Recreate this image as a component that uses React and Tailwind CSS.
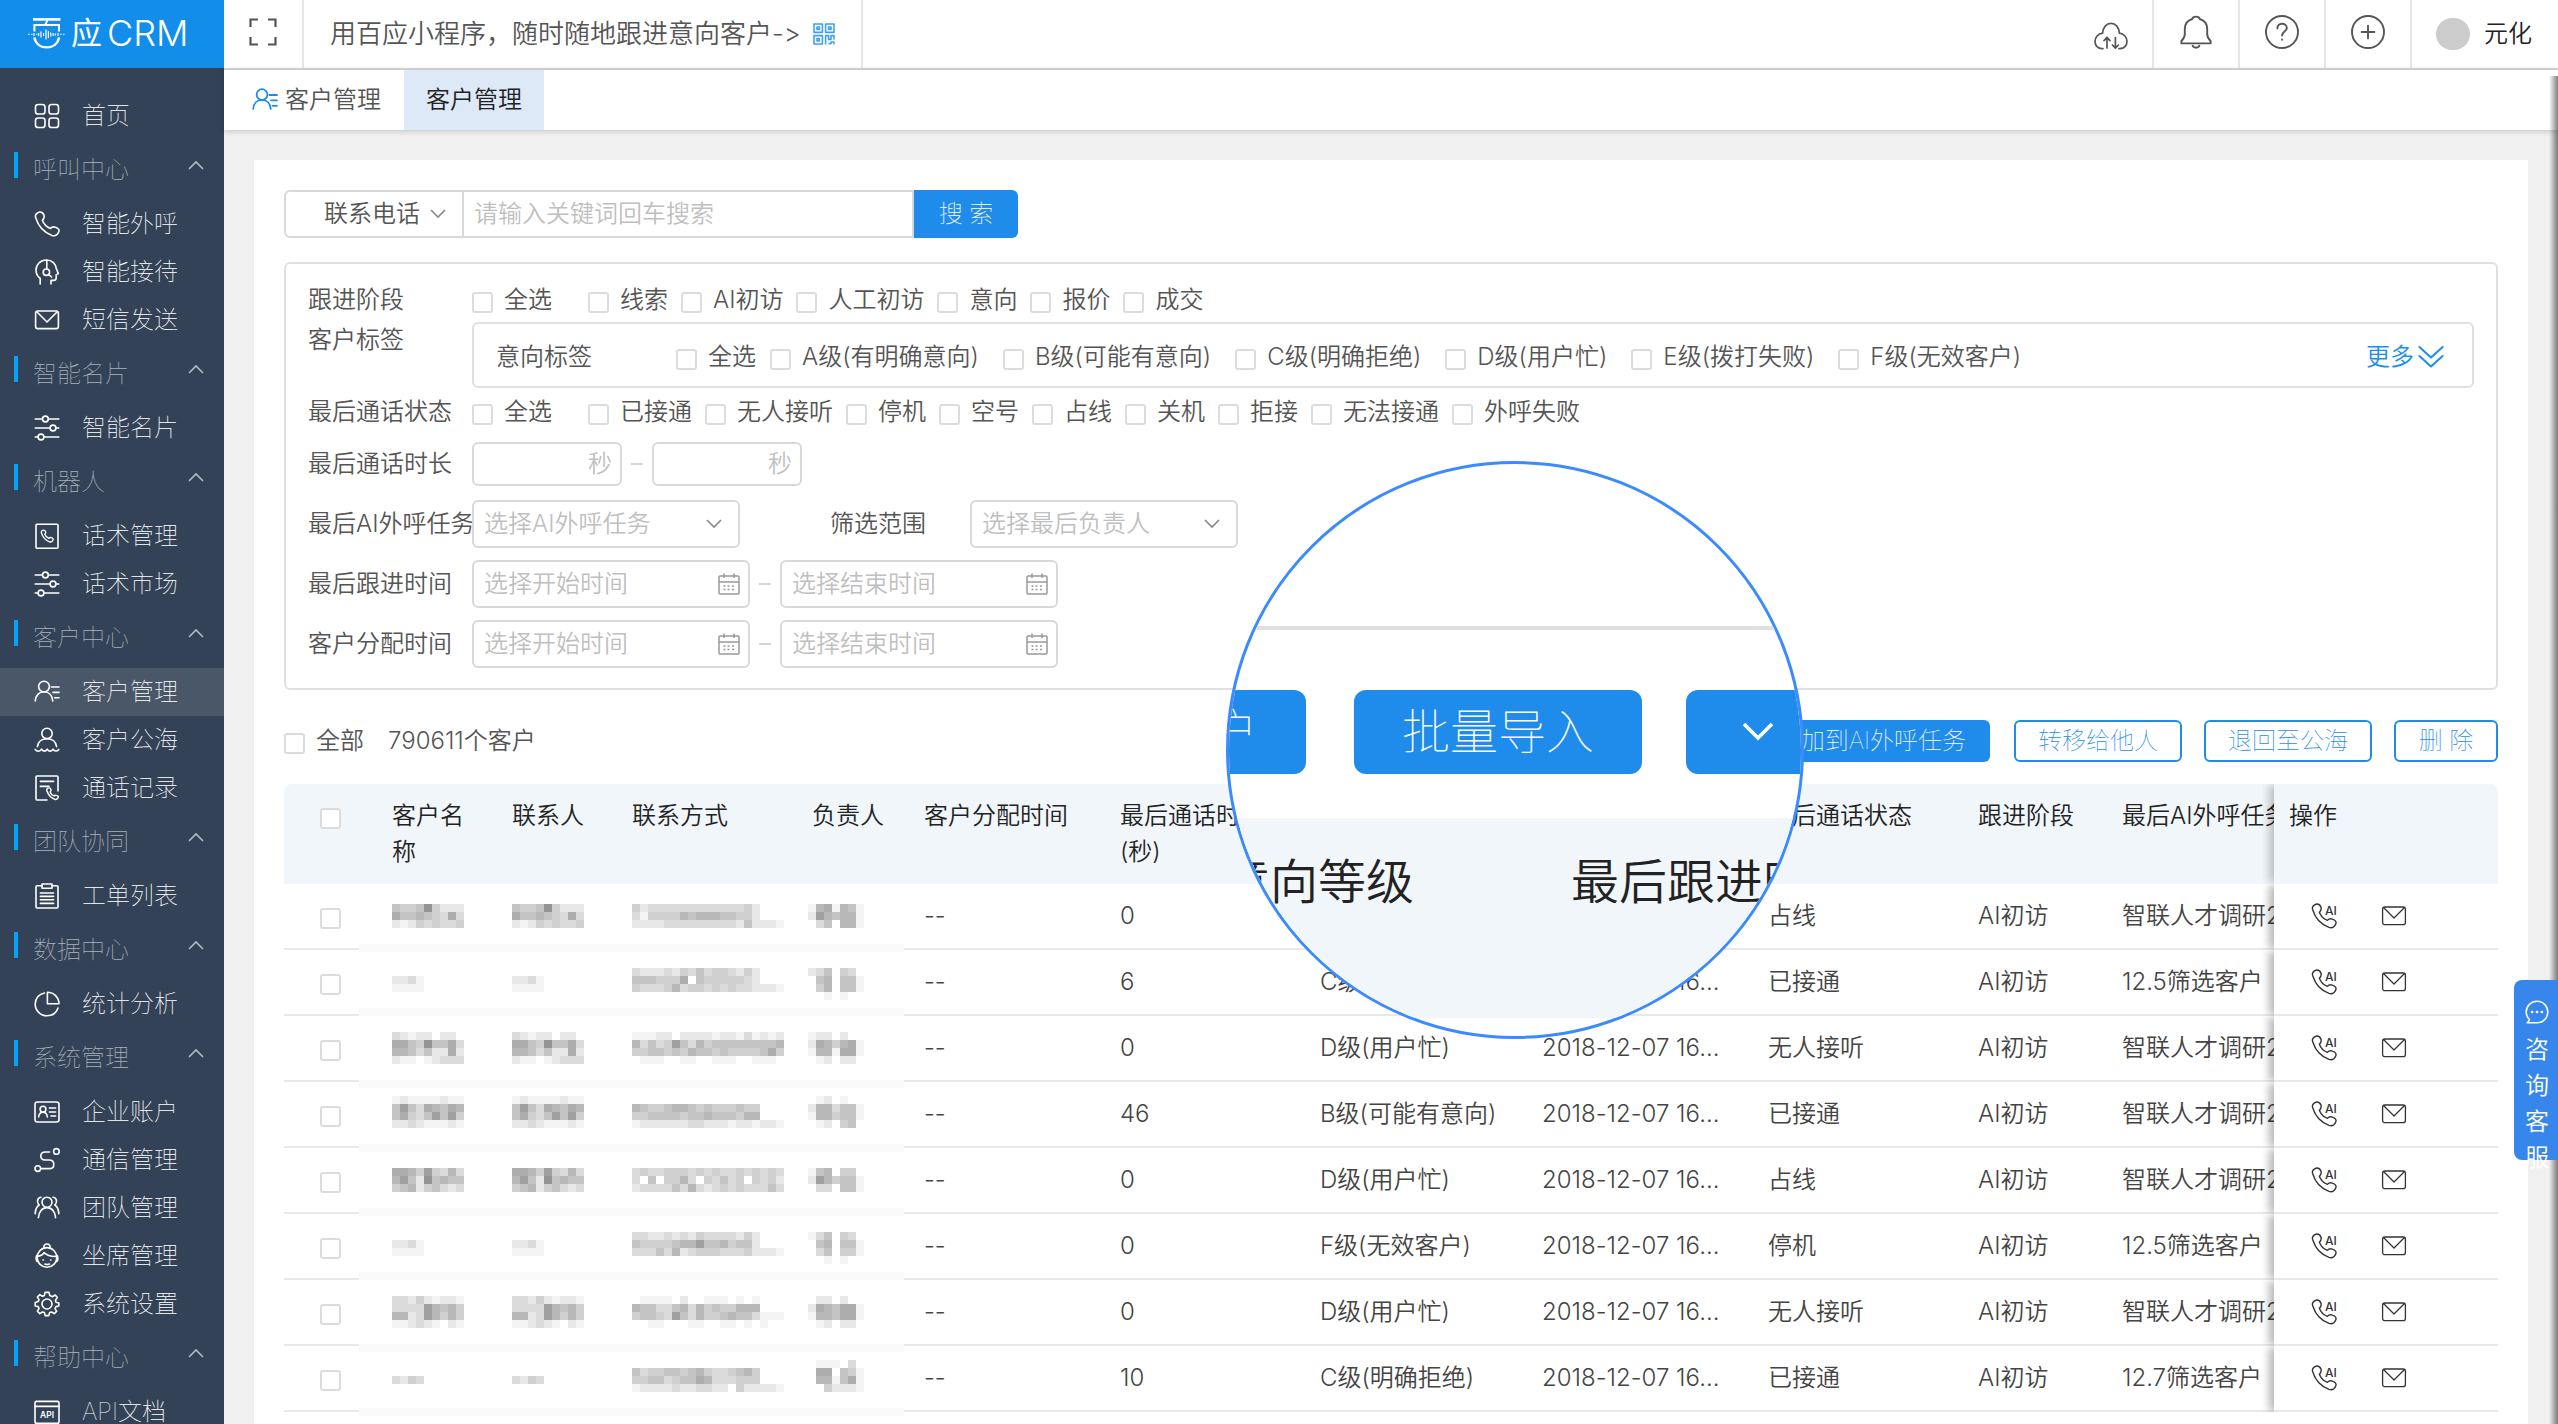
import React from 'react';

/* ---------- icons ---------- */

function Svg({ children, className = 'size-[26px]', sw = 1.6, box = '0 0 26 26' }) {
  return (
    <svg
      viewBox={box}
      className={'shrink-0 ' + className}
      fill="none"
      stroke="currentColor"
      strokeWidth={sw}
      strokeLinecap="round"
      strokeLinejoin="round"
      aria-hidden="true"
    >
      {children}
    </svg>
  );
}

const HANDSET =
  'M1.8 7 C0.6 4.4 2.4 1.6 5.6 1 C7.8 0.8 9.2 2 10 4.2 C10.8 6.6 9.8 7.8 8.4 9.2 C9.6 12.6 13 16 16.4 17.4 C17.8 15.8 19.4 15.4 21.4 16.2 C24.4 17.2 25.6 18.8 24.8 20.8 C23.6 23.8 21 25.4 18 24.4 C10.4 21.6 4.4 15.4 1.8 7 Z';

const ICONS = {
  home: (
    <>
      <rect x="1.5" y="1.5" width="9.5" height="9.5" rx="2.6" />
      <rect x="15" y="1.5" width="9.5" height="9.5" rx="2.6" />
      <rect x="1.5" y="15" width="9.5" height="9.5" rx="2.6" />
      <rect x="15" y="15" width="9.5" height="9.5" rx="2.6" />
    </>
  ),
  phone: <path d={HANDSET} />,
  head: (
    <>
      <path d="M6.2 25 V19.4 C3.6 17.6 2 14.4 2 11 C2 5.6 6.4 1 12.4 1 C18.4 1 21.8 5 22.2 9.4 L24.4 14.6 L22.2 15.8 V18.8 C22.2 20.6 21.4 21.4 19.8 21.4 H17 V25" />
      <path d="M12.8 1.2 V9.8" />
      <circle cx="12.4" cy="13.2" r="3.2" />
      <path d="M14.8 15.6 L17.6 18" />
    </>
  ),
  mail: (
    <>
      <rect x="1.6" y="4" width="22.8" height="17.6" rx="2.2" />
      <path d="M3 5 L13 15 L23 5" />
    </>
  ),
  sliders: (
    <>
      <path d="M1.2 4 H8.4 M14.4 4 H24.8 M1.2 13 H16 M22 13 H24.8 M1.2 22 H4 M10 22 H24.8" />
      <circle cx="11.4" cy="4" r="2.9" />
      <circle cx="19" cy="13" r="2.9" />
      <circle cx="7" cy="22" r="2.9" />
    </>
  ),
  book: (
    <>
      <rect x="2" y="1.2" width="22" height="24" rx="1" />
      <g transform="translate(6.6 6.6) scale(0.5)" strokeWidth="2.8">
        <path d={HANDSET} />
      </g>
    </>
  ),
  customer: (
    <>
      <circle cx="10" cy="7.6" r="5.4" />
      <path d="M1.2 22 C1.6 16.6 5 12.8 10 12.8 C15 12.8 18.2 16.6 18.8 22" />
      <path d="M17.4 8 H25 M19 13.4 H25 M20.6 18.8 H25" />
    </>
  ),
  sea: (
    <>
      <circle cx="13" cy="6.4" r="5.2" />
      <path d="M3.4 19.6 C4 15 7.6 11.8 13 11.8 C18.4 11.8 22 15 22.6 19.6" />
      <path d="M1.2 22.4 C3 24.8 6 24.8 7.6 22.2 C9.4 24.8 12 24.8 13.2 22.2 C15 24.8 17.6 24.8 19 22.2 C20.4 24.6 23 24.6 24.8 22.4" />
    </>
  ),
  record: (
    <>
      <path d="M13 25 H3 C2.4 25 2 24.6 2 24 V2 C2 1.4 2.4 1 3 1 H23 C23.6 1 24 1.4 24 2 V16" />
      <path d="M6.4 6.4 H19.6 M6.4 11.4 H15" />
      <g transform="translate(12 12.4) scale(0.49)" strokeWidth="3">
        <path d={HANDSET} />
      </g>
    </>
  ),
  clipboard: (
    <>
      <path d="M8 2.8 H3 C2.4 2.8 2 3.2 2 3.8 V24 C2 24.6 2.4 25 3 25 H23 C23.6 25 24 24.6 24 24 V3.8 C24 3.2 23.6 2.8 23 2.8 H18" />
      <rect x="8" y="1" width="10" height="4.2" />
      <path d="M6.4 10 H19.6 M6.4 13.4 H19.6 M6.4 16.8 H19.6 M6.4 20.4 H19.6" />
    </>
  ),
  pie: (
    <>
      <path d="M10.4 2 C5 3 1.2 7.6 1.2 13 C1.2 19.6 6.4 24.8 13 24.8 C18.2 24.8 22.4 21.6 24 17" />
      <path d="M13.4 1.2 V12.8 H25 C25 6.4 19.8 1.2 13.4 1.2 Z" />
    </>
  ),
  idcard: (
    <>
      <rect x="1" y="3" width="24" height="20" rx="2.4" />
      <circle cx="9" cy="10.2" r="2.9" />
      <path d="M4.6 18 C5 15 6.6 13.2 9 13.2 C11.4 13.2 13 15 13.4 18" />
      <path d="M15.4 9 H21.6 M15.4 13 H21.6 M17 17 H21.6" />
    </>
  ),
  route: (
    <>
      <circle cx="3.8" cy="21.6" r="2.8" />
      <circle cx="22.4" cy="4.4" r="2.8" />
      <path d="M15.6 5 H11.4 C8.6 5 6.8 6.8 6.8 9 C6.8 11.2 8.4 13 11 13 H15 C18 13 19.8 15 19.8 17.4 C19.8 19.8 18 21.6 15.4 21.6 H6.8" />
    </>
  ),
  team: (
    <>
      <circle cx="13" cy="7.2" r="5" />
      <path d="M4.4 22.6 C4.8 17 8 12.6 13 12.6 C18 12.6 21.2 17 21.6 22.6" />
      <path d="M7 2.2 C4.6 2.4 3.2 4.6 3.6 7 C3.8 8.4 4.4 9.4 5.2 10 C3 11.4 1.4 14.6 1.2 18.8" />
      <path d="M19 2.2 C21.4 2.4 22.8 4.6 22.4 7 C22.2 8.4 21.6 9.4 20.8 10 C23 11.4 24.6 14.6 24.8 18.8" />
    </>
  ),
  agent: (
    <>
      <circle cx="13" cy="14.4" r="9.8" />
      <path d="M9.8 4.8 C9.8 2.4 11 1 13 1 C15 1 16.2 2.4 16.2 4.8" />
      <path d="M3.4 12 C1.6 12.8 1.6 18 3.8 18.4 M22.6 12 C24.4 12.8 24.4 18 22.2 18.4" />
      <path d="M3.8 13.4 C7 12.8 9 11.6 10 9.6 C13 12.4 18 13.6 22.2 13.4" />
      <path d="M9 17 H9.4 M16.6 17 H17 M11 21 C12.4 21.6 14 21.6 15.4 21" />
    </>
  ),
  gear: (
    <>
      <circle cx="13" cy="13" r="5" />
      <path d="M11 1.4 H15 L15.8 4.6 L18.4 5.7 L21.2 4 L23.4 6.6 L21.4 9.2 L22 11.2 L24.8 12 V15 L22 15.6 L21 17.6 L22.6 20.4 L20.2 22.6 L17.6 21 L15.6 21.6 L14.8 24.6 H11.2 L10.4 21.6 L8.4 21 L5.8 22.6 L3.4 20.2 L5 17.6 L4.2 15.6 L1.2 15 V11.4 L4.2 10.6 L5 8.6 L3.4 6 L5.8 3.6 L8.4 5.2 L10.4 4.4 Z" />
    </>
  ),
  api: (
    <>
      <rect x="1" y="2.4" width="24" height="22" rx="1.6" />
      <path d="M1 7.4 H25" />
      <text x="13" y="19" textAnchor="middle" fontSize="8.5" fontWeight="600" fill="currentColor" stroke="none">
        API
      </text>
    </>
  ),
};

function Chevron({ up = false, className = 'h-[10px] w-4', sw = 1.6 }) {
  return (
    <svg viewBox="0 0 16 10" className={'shrink-0 ' + className} fill="none" stroke="currentColor" strokeWidth={sw} aria-hidden="true">
      <path d={up ? 'M1 9 L8 2 L15 9' : 'M1 1 L8 8 L15 1'} />
    </svg>
  );
}

function Calendar() {
  return (
    <svg viewBox="0 0 22 22" className="size-[22px] shrink-0 text-[#999]" fill="none" stroke="currentColor" strokeWidth="1.5" aria-hidden="true">
      <rect x="1" y="3" width="20" height="18" rx="1" />
      <path d="M1 9 H21 M6 0.5 V5 M16 0.5 V5" />
      <path d="M9.5 13 H11.5 M14 13 H16 M5.5 16.5 H7.5 M9.5 16.5 H11.5 M14 16.5 H16 M5.5 13 H7.5" />
    </svg>
  );
}

function CallAi() {
  return (
    <svg viewBox="0 0 28 26" className="h-[26px] w-7" fill="none" stroke="currentColor" strokeWidth="1.4" strokeLinejoin="round" aria-hidden="true">
      <path d={HANDSET} />
      <text x="14" y="12" fontSize="12" fontWeight="500" fill="currentColor" stroke="none">
        AI
      </text>
    </svg>
  );
}

/* ---------- sidebar ---------- */

const MENU = [
  { items: [['home', '首页']] },
  { title: '呼叫中心', items: [['phone', '智能外呼'], ['head', '智能接待'], ['mail', '短信发送']] },
  { title: '智能名片', items: [['sliders', '智能名片']] },
  { title: '机器人', items: [['book', '话术管理'], ['sliders', '话术市场']] },
  { title: '客户中心', items: [['customer', '客户管理', true], ['sea', '客户公海'], ['record', '通话记录']] },
  { title: '团队协同', items: [['clipboard', '工单列表']] },
  { title: '数据中心', items: [['pie', '统计分析']] },
  {
    title: '系统管理',
    items: [['idcard', '企业账户'], ['route', '通信管理'], ['team', '团队管理'], ['agent', '坐席管理'], ['gear', '系统设置']],
  },
  { title: '帮助中心', items: [['api', 'API文档']] },
];

function Logo() {
  return (
    <div className="flex h-[68px] shrink-0 items-center bg-[#128eea] pb-[2px] pl-7 text-white">
      <svg viewBox="0 0 38 34" className="h-[34px] w-[38px] shrink-0" fill="none" stroke="currentColor" strokeWidth="2" aria-hidden="true">
        <path d="M5 3.4 H32.4" strokeWidth="2.6" />
        <path d="M19.4 4 L17.4 9" />
        <path d="M6.4 15.4 V9 H31 V15.4" />
        <path d="M6.4 21.4 C7.4 27.8 12.4 31.4 18.7 31.4 C25 31.4 30 27.8 31 21.4" strokeWidth="2.4" />
        <path
          d="M0.2 18.4 H1.4 M3.2 18.4 H4.4 M6 17 V20 M8.2 18.4 H9.2 M10.6 17 V20 M13 15.6 V21.4 M15.6 17 V20 M18 13.4 V23.4 M20.4 15 V22 M22.8 16.4 V20.6 M25.2 17 V20 M27.4 17.4 V19.4 M30 17 V20 M32.4 18.4 H33.6 M35.2 18.4 H36.4"
          strokeWidth="1.2"
        />
      </svg>
      <span className="ml-[5px] text-[31px] leading-9 font-normal">应</span>
      <span className="ml-[5px] text-4xl leading-9 font-light">CRM</span>
    </div>
  );
}

function Sidebar() {
  return (
    <aside className="flex w-56 shrink-0 flex-col overflow-hidden bg-[#334257]">
      <Logo />
      <nav className="pt-6 font-thin text-white">
        {MENU.map((group, i) => (
          <section key={i}>
            {group.title && (
              <button type="button" className="flex h-[60px] w-full items-start pt-3 pr-5 pl-[14px] text-[#a9b1bb]">
                <span className="h-[26px] w-1 bg-[#00a5fb]" />
                <span className="ml-[15px] leading-9">{group.title}</span>
                <span className="mt-2 ml-auto text-[#b4bbc4]">
                  <Chevron up />
                </span>
              </button>
            )}
            <ul>
              {group.items.map(([icon, label, active]) => (
                <li key={label}>
                  <a href="#" className={'flex h-12 items-center gap-[22px] pl-[34px] ' + (active ? 'bg-[#4a5768]' : '')}>
                    <Svg>{ICONS[icon]}</Svg>
                    <span>{label}</span>
                  </a>
                </li>
              ))}
            </ul>
          </section>
        ))}
      </nav>
    </aside>
  );
}

/* ---------- header ---------- */

function TopBar() {
  const cell = 'flex h-full w-[86px] shrink-0 items-center justify-center border-l-2 border-[#e6e6e6] pb-1';
  return (
    <header className="flex h-[70px] shrink-0 items-center border-b-2 border-[#d8d8d8] bg-white text-[#555]">
      <button type="button" aria-label="全屏" className="flex h-full w-20 shrink-0 items-center justify-center border-r-2 border-[#e6e6e6] pb-1">
        <Svg sw={2.2} box="0 0 28 28" className="size-7">
          <path d="M1.5 9 V1.5 H9 M19 1.5 H26.5 V9 M26.5 19 V26.5 H19 M9 26.5 H1.5 V19" strokeLinecap="butt" strokeLinejoin="miter" />
        </Svg>
      </button>
      <p className="flex h-full items-center border-r-2 border-[#e6e6e6] pr-[26px] pl-[26px] text-[26px] whitespace-nowrap">
        用百应小程序，随时随地跟进意向客户-&gt;
        <Svg box="0 0 22 22" className="ml-3 size-[22px] text-[#3fa0ee]" sw={1.6}>
          <path d="M1 1 H9.4 V9.4 H1 Z M12.6 1 H21 V9.4 H12.6 Z M1 12.6 H9.4 V21 H1 Z M4 4 H6.4 V6.4 H4 Z M15.6 4 H18 V6.4 H15.6 Z M4 15.6 H6.4 V18 H4 Z" />
          <path d="M12.6 21 V12.6 H15.6 V16.4 H18 V12.6 H21 V16 M16 20.8 H18 V19 H21 V21" />
        </Svg>
      </p>
      <div className="ml-auto flex h-full items-center">
        <button type="button" aria-label="云同步" className="flex h-full w-[82px] items-center justify-center pt-1">
          <Svg box="0 0 34 28" className="h-7 w-[34px]" sw={1.7}>
            <path d="M9 26.6 H8 C4 26.6 1 23.8 1 19.6 C1 15.6 4 11.6 8.6 11.2 C9 5.4 12.4 1.4 17 1.4 C21.6 1.4 25 5.4 25.4 11.2 C30 11.6 33 15.6 33 19.6 C33 23.8 30 26.6 26 26.6 H25" />
            <path d="M13 26 V15.6 M10 18.6 L13 15.4 L16 18.6 M21.4 15.6 V26 M18.4 23 L21.4 26.2 L24.4 23" />
          </Svg>
        </button>
        <button type="button" aria-label="通知" className={cell}>
          <Svg box="0 0 34 34" className="size-[34px]" sw={1.9}>
            <path d="M2.4 28.4 H31.6 V26 C29.4 24 28.2 22 28.2 19 V14 C28.2 9 25.2 5.4 20.8 4 C20 0.8 14 0.8 13.2 4 C8.8 5.4 5.8 9 5.8 14 V19 C5.8 22 4.6 24 2.4 26 Z" />
            <path d="M13.6 30.6 C14.4 33.4 19.6 33.4 20.4 30.6" />
          </Svg>
        </button>
        <button type="button" aria-label="帮助" className={cell}>
          <Svg box="0 0 34 34" className="size-[34px]" sw={1.9}>
            <circle cx="17" cy="17" r="16" />
            <path d="M12.4 13.4 C12.4 10.6 14.4 8.8 17 8.8 C19.8 8.8 21.8 10.6 21.8 13 C21.8 16.6 17 16.6 17 20.6 M17 24.4 V24.8" />
          </Svg>
        </button>
        <button type="button" aria-label="新建" className={cell}>
          <Svg box="0 0 34 34" className="size-[34px]" sw={1.9}>
            <circle cx="17" cy="17" r="16" />
            <path d="M10.6 17 H23.4 M17 10.6 V23.4" />
          </Svg>
        </button>
        <button type="button" className="flex h-full items-center gap-[14px] border-l-2 border-[#e6e6e6] pr-[26px] pl-6 text-[#222]">
          <span className="h-8 w-[34px] rounded-full bg-[#ccc]" />
          元化
        </button>
      </div>
    </header>
  );
}

function TabBar() {
  return (
    <nav className="relative z-10 flex h-[60px] shrink-0 items-stretch bg-white shadow-[0_1px_6px_rgba(0,0,0,0.2)]">
      <a href="#" className="flex w-[180px] items-center gap-[7px] pl-7 text-[#555]">
        <Svg className="size-[26px] text-[#1f8ceb]" sw={1.8}>{ICONS.customer}</Svg>
        客户管理
      </a>
      <a href="#" className="flex w-[140px] items-center justify-center bg-[#dde9f7] text-[#222]">
        客户管理
      </a>
    </nav>
  );
}

/* ---------- filters ---------- */

function Check({ label, ariaLabel }) {
  return (
    <label className="flex shrink-0 items-center gap-3">
      <input
        type="checkbox"
        aria-label={ariaLabel}
        className="mt-1 size-[21px] shrink-0 appearance-none rounded-[3px] border-2 border-[#dcdcdc] bg-white checked:bg-[#1f8ceb]"
      />
      {label && <span className="-ml-px">{label}</span>}
    </label>
  );
}

function Row({ label, className, children }) {
  return (
    <div className={'flex items-center ' + className}>
      <span className="w-[164px] shrink-0 whitespace-nowrap">{label}</span>
      {children}
    </div>
  );
}

function SelectBox({ text, id }) {
  return (
    <span className="relative flex h-12 w-[268px] items-center">
      <select id={id} aria-label={text} className="h-full w-full appearance-none rounded-md border-2 border-[#d9d9d9] bg-transparent pl-[10px] text-[#bfbfbf]">
        <option>{text}</option>
      </select>
      <Chevron className="pointer-events-none absolute right-[18px] h-[10px] w-4 text-[#888]" />
    </span>
  );
}

function DateBox({ text }) {
  return (
    <span className="flex h-12 w-[278px] items-center rounded-md border-2 border-[#d9d9d9] pr-2 pl-[10px]">
      <input type="text" placeholder={text} aria-label={text} className="min-w-0 flex-1 outline-none placeholder:text-[#bfbfbf]" />
      <Calendar />
    </span>
  );
}

function SecondsBox({ name }) {
  return (
    <label className="flex h-11 w-[150px] items-center rounded-md border-2 border-[#d9d9d9] pr-2 pl-2 text-[#bfbfbf]">
      <input type="text" aria-label={name} className="min-w-0 flex-1 outline-none" />
      秒
    </label>
  );
}

const Dash = () => <span className="mx-[9px] h-[2px] w-3 bg-[#d5d5d5]" />;

function DateRange() {
  return (
    <>
      <DateBox text="选择开始时间" />
      <Dash />
      <DateBox text="选择结束时间" />
    </>
  );
}

function Filters() {
  return (
    <section className="mt-6 rounded-md border-2 border-[#e0e0e0] px-[22px] pt-[18px] pb-5 text-[#555]">
      <Row label="跟进阶段" className="h-9">
        <Check label="全选" />
        <div className="ml-9 flex gap-[13px]">
          {['线索', 'AI初访', '人工初访', '意向', '报价', '成交'].map((t) => (
            <Check key={t} label={t} />
          ))}
        </div>
      </Row>
      <div className="mt-1 flex">
        <span className="h-9 w-[164px] shrink-0 leading-9">客户标签</span>
        <div className="flex h-[66px] flex-1 items-center rounded-md border-2 border-[#e0e0e0] pt-1 pr-7 pl-[22px]">
          <span className="w-[180px] shrink-0">意向标签</span>
          <Check label="全选" />
          <div className="ml-[14px] flex gap-6">
            {['A级(有明确意向)', 'B级(可能有意向)', 'C级(明确拒绝)', 'D级(用户忙)', 'E级(拨打失败)', 'F级(无效客户)'].map((t) => (
              <Check key={t} label={t} />
            ))}
          </div>
          <button type="button" className="ml-auto flex items-center gap-1 text-[#1890f0]">
            更多
            <Svg box="0 0 26 24" className="h-6 w-[26px]" sw={2}>
              <path d="M1.4 2 L13 12.6 L24.6 2 M1.4 11 L13 21.6 L24.6 11" />
            </Svg>
          </button>
        </div>
      </div>
      <Row label="最后通话状态" className="mt-[6px] h-9">
        <Check label="全选" />
        <div className="ml-9 flex gap-[13px]">
          {['已接通', '无人接听', '停机', '空号', '占线', '关机', '拒接', '无法接通', '外呼失败'].map((t) => (
            <Check key={t} label={t} />
          ))}
        </div>
      </Row>
      <Row label="最后通话时长" className="mt-3">
        <SecondsBox name="最短通话时长" />
        <Dash />
        <SecondsBox name="最长通话时长" />
      </Row>
      <Row label="最后AI外呼任务" className="mt-[14px]">
        <SelectBox text="选择AI外呼任务" id="task" />
        <label htmlFor="owner" className="ml-[90px] w-[140px]">筛选范围</label>
        <SelectBox text="选择最后负责人" id="owner" />
      </Row>
      <Row label="最后跟进时间" className="mt-3">
        <DateRange />
      </Row>
      <Row label="客户分配时间" className="mt-3">
        <DateRange />
      </Row>
    </section>
  );
}

/* ---------- table ---------- */

const SHADES = ['#ffffff', '#f4f4f4', '#e8e8e8', '#dbdbdb', '#d0d0d0', '#c4c4c4', '#b8b8b8', '#adadad', '#a0a0a0', '#949494'];

const BLANK = ['2231', '1111'];

const ROWS = [
  {
    top: 20, band: 60, secs: '0', level: 'D级(用户忙)', status: '占线', task: '智联人才调研2期',
    name: ['544594222', '755654373', '212434334'],
    phone: ['4233333333333342000', '3144446566655442000', '2222333333333252221'],
    owner: ['1671651', '2865661', '0350661'],
  },
  {
    top: 18, band: 58, secs: '6', level: 'C级(明确拒绝)', status: '已接通', task: '12.5筛选客户', nameTop: 26,
    name: BLANK,
    phone: ['3222324353443242000', '5554447054444432000', '4333463443434332221'],
    owner: ['2350430', '0560551', '0460551', '0010100'],
  },
  {
    top: 16, band: 64, secs: '0', level: 'D级(用户忙)', status: '无人接听', task: '智联人才调研2期',
    name: ['321220220', '775495573', '665352272', '211012333'],
    phone: ['1112202222122131212', '6353485364555555556', '4455454655454444574', '0111001100111001110'],
    owner: ['1220200', '2764671', '1661771', '0120220'],
  },
  {
    top: 14, band: 62, secs: '46', level: 'B级(可能有意向)', status: '已接通', task: '智联人才调研2期',
    name: ['121111211', '585376576', '574358584', '223211121'],
    phone: ['0000000000000000000', '6544566545444544000', '4455554556555466000', '1222222332221221221'],
    owner: ['0120100', '2663551', '1664551', '0120450'],
  },
  {
    top: 20, band: 60, secs: '0', level: 'D级(用户忙)', status: '占线', task: '智联人才调研2期',
    name: ['776484363', '685295655', '456245323'],
    phone: ['3433444343433434343', '3050446304353404342', '2333353632343433353'],
    owner: ['1560440', '2864551', '0330551'],
  },
  {
    top: 18, band: 58, secs: '0', level: 'F级(无效客户)', status: '停机', task: '12.5筛选客户', nameTop: 26,
    name: BLANK,
    phone: ['3322323243333242000', '5444456685564552000', '3335362344433342221'],
    owner: ['1350430', '0560551', '0350441', '0010100'],
  },
  {
    top: 16, band: 64, secs: '0', level: 'D级(用户忙)', status: '无人接听', task: '智联人才调研2期',
    name: ['332421221', '333386564', '662386464', '112321021'],
    phone: ['0111102001110101000', '6553356364544666000', '4554385364456553111', '0011000110011010100'],
    owner: ['0220200', '2765771', '1665771', '0120220'],
  },
  {
    top: 14, band: 62, secs: '10', level: 'C级(明确拒绝)', status: '已接通', task: '12.7筛选客户', nameTop: 30,
    name: ['3243'],
    phone: ['0000000000000000000', '5344554564334564000', '4455345576333444000', '1222232233220422221'],
    owner: ['0111030', '0770541', '0661571', '0042221'],
  },
];

/* Pixelated private data: 8px blocks, plus the pale band across the row rule. */
function Mosaic({ rows, x, top, band }) {
  return (
    <svg className="block h-16 w-full overflow-visible" aria-hidden="true" shapeRendering="crispEdges">
      <rect x="0" y={band} width="100%" height="8" fill="#fafafa" />
      {rows.map((line, r) =>
        line.split('').map((d, c) =>
          d === '0' ? null : <rect key={r + '-' + c} x={x + c * 8} y={top + r * 8} width="8" height="8" fill={SHADES[+d]} />
        )
      )}
    </svg>
  );
}

const HEADS = [
  ['客户名称', 'pl-[33px] pr-3'],
  ['联系人', 'pl-4'],
  ['联系方式', 'pl-4'],
  ['负责人', 'pl-4'],
  ['客户分配时间', 'pl-5'],
  ['最后通话时长(秒)', 'pl-4 pr-8'],
  ['意向等级', 'pl-4'],
  ['最后跟进时间', 'pl-4'],
  ['最后通话状态', 'pl-4'],
  ['跟进阶段', 'pl-4'],
  ['最后AI外呼任务', 'pl-4 whitespace-nowrap overflow-hidden'],
];

function CustomerTable() {
  const td = 'border-b-2 border-[#e8e8e8] p-0 whitespace-nowrap';
  const edge = 'relative border-b-2 border-[#e8e8e8] bg-white shadow-[-6px_0_8px_-1px_rgba(0,0,0,0.28)] [clip-path:inset(0_0_0_-12px)]';
  return (
    <table className="mt-[22px] w-full table-fixed border-separate border-spacing-0 text-left text-[#444]">
      <colgroup>
        <col className="w-[75px]" />
        <col className="w-[137px]" />
        <col className="w-[120px]" />
        <col className="w-[180px]" />
        <col className="w-[108px]" />
        <col className="w-[200px]" />
        <col className="w-[200px]" />
        <col className="w-[222px]" />
        <col className="w-[226px]" />
        <col className="w-[210px]" />
        <col className="w-[144px]" />
        <col className="w-[168px]" />
        <col className="w-[224px]" />
      </colgroup>
      <thead>
        <tr className="h-[100px] align-top text-[#222]">
          <th className="rounded-tl-lg bg-[#f1f6fb] pt-5 pl-9 font-normal">
            <Check ariaLabel="选择本页" />
          </th>
          {HEADS.map(([t, pad]) => (
            <th key={t} className={'bg-[#f1f6fb] pt-[14px] leading-9 font-[350] ' + pad}>{t}</th>
          ))}
          <th className="relative rounded-tr-lg bg-[#f1f6fb] pt-[14px] pl-[15px] leading-9 font-[350] shadow-[-6px_0_8px_-1px_rgba(0,0,0,0.22)] [clip-path:inset(0_0_0_-12px)]">
            操作
          </th>
        </tr>
      </thead>
      <tbody>
        {ROWS.map((r, i) => (
          <tr key={i} className="h-[66px]">
            <td className={td}>
              <div className="pl-9"><Check ariaLabel={'选择第' + (i + 1) + '行'} /></div>
            </td>
            <td className="p-0 align-top"><Mosaic rows={r.name} x={33} top={r.nameTop ?? r.top} band={r.band} /></td>
            <td className="p-0 align-top"><Mosaic rows={r.name} x={16} top={r.nameTop ?? r.top} band={r.band} /></td>
            <td className="p-0 align-top"><Mosaic rows={r.phone} x={16} top={r.top} band={r.band} /></td>
            <td className="p-0 align-top"><Mosaic rows={r.owner} x={12} top={r.top} band={r.band} /></td>
            <td className={td}><div className="pl-5">--</div></td>
            <td className={td}><div className="pl-4">{r.secs}</div></td>
            <td className={td}><div className="pl-4">{r.level}</div></td>
            <td className={td}><div className="pl-4">2018-12-07 16...</div></td>
            <td className={td}><div className="pl-4">{r.status}</div></td>
            <td className={td}><div className="pl-4">AI初访</div></td>
            <td className={td + ' overflow-hidden'}><div className="pl-4">{r.task}</div></td>
            <td className={edge + ' p-0'}>
              <div className="flex items-center gap-[42px] pl-[37px] text-[#333]">
                <button type="button" aria-label="AI外呼"><CallAi /></button>
                <button type="button" aria-label="发短信"><Svg sw={1.3}>{ICONS.mail}</Svg></button>
              </div>
            </td>
          </tr>
        ))}
      </tbody>
    </table>
  );
}

function Toolbar() {
  const solid = 'flex h-[42px] shrink-0 items-center rounded-md bg-[#1f8ceb] px-6 font-thin text-white';
  const ghost = 'flex h-[42px] shrink-0 items-center justify-center rounded-md border-2 border-[#1f8ceb] font-thin text-[#1f8ceb]';
  return (
    <div className="mt-[30px] flex items-center text-[#555]">
      <Check label="全部" />
      <span className="ml-6">790611个客户</span>
      <div className="ml-auto flex gap-6">
        <button type="button" className={solid}>添加客户</button>
        <button type="button" className={solid}>批量导入</button>
        <button type="button" aria-label="展开" className={solid}><Chevron /></button>
        <button type="button" className={solid}>添加到AI外呼任务</button>
        <div className="flex gap-[22px]">
          <button type="button" className={ghost + ' w-[168px]'}>转移给他人</button>
          <button type="button" className={ghost + ' w-[168px]'}>退回至公海</button>
          <button type="button" className={ghost + ' w-[104px]'}>删 除</button>
        </div>
      </div>
    </div>
  );
}

/* Round 2x magnifier over the import buttons. */
function Lens() {
  const btn = 'flex h-[84px] shrink-0 items-center rounded-xl bg-[#1f8ceb] px-12';
  return (
    <div className="absolute top-[301px] left-[972px] z-20 size-[578px] overflow-hidden rounded-full border-[3px] border-[#3b8bff] bg-white text-5xl">
      <div className="h-[166px] border-b-4 border-[#e0e0e0]" />
      <div className="mt-[60px] -ml-[211px] flex w-[900px] font-thin text-white">
        <button type="button" className={btn}>添加客户</button>
        <button type="button" className={btn + ' ml-12'}>批量导入</button>
        <button type="button" aria-label="更多导入方式" className={btn + ' ml-11 w-[180px]'}>
          <Chevron className="ml-2 h-5 w-8" sw={1.8} />
        </button>
      </div>
      <div className="mt-11 -ml-[7px] flex h-[200px] w-[700px] bg-[#f1f6fb] pt-7 leading-[72px] font-[350] text-[#222]">
        <span className="w-[349px] shrink-0">意向等级</span>
        <span className="shrink-0">最后跟进时间</span>
      </div>
    </div>
  );
}

function Support() {
  return (
    <button
      type="button"
      className="absolute top-[980px] right-0 z-30 flex h-[180px] w-11 flex-col items-center rounded-l-lg bg-[#3686eb] pt-5 pl-[2px] text-white"
    >
      <Svg box="0 0 24 24" className="size-6" sw={1.5}>
        <path d="M4.4 19.4 C2.4 17.6 1.2 15 1.2 12 C1.2 6 6 1.2 12 1.2 C18 1.2 22.8 6 22.8 12 C22.8 18 18 22.8 12 22.8 H2 C3.4 22 4.2 21 4.4 19.4 Z" />
        <path d="M7 12 H7.2 M11.9 12 H12.1 M16.8 12 H17" strokeWidth="2.6" />
      </Svg>
      <span className="mt-2 w-6 leading-9">咨询客服</span>
    </button>
  );
}

export default function App() {
  return (
    <div
      lang="zh-CN"
      className="relative flex h-screen overflow-hidden bg-[#f0f0f0] font-[Inter,'Noto_Sans_CJK_SC',sans-serif] text-2xl font-[350] [font-feature-settings:'calt'_0]"
    >
      <Sidebar />
      <div className="flex min-w-0 flex-1 flex-col">
        <TopBar />
        <TabBar />
        <main className="min-h-0 flex-1 overflow-hidden px-[30px] pt-[30px]">
          <div className="relative min-h-full bg-white px-[30px] pt-[30px]">
            <form className="flex h-12" onSubmit={(e) => e.preventDefault()}>
              <span className="relative flex w-[180px] items-center">
                <select aria-label="搜索字段" className="h-full w-full appearance-none rounded-l-md border-2 border-[#d9d9d9] bg-transparent pl-[38px] text-[#555]">
                  <option>联系电话</option>
                </select>
                <Chevron className="pointer-events-none absolute right-[18px] h-[10px] w-4 text-[#888]" />
              </span>
              <input
                type="text"
                aria-label="关键词"
                placeholder="请输入关键词回车搜索"
                className="-ml-[2px] w-[452px] border-2 border-[#d9d9d9] pl-[10px] outline-none placeholder:text-[#bfbfbf]"
              />
              <button type="submit" className="w-[104px] rounded-r-md bg-[#1f8ceb] font-thin text-white">搜 索</button>
            </form>
            <Filters />
            <Toolbar />
            <CustomerTable />
            <Lens />
          </div>
        </main>
      </div>
      <div className="pointer-events-none absolute top-[76px] right-0 bottom-0 z-20 w-[9px] bg-gradient-to-r from-transparent to-black/50" />
      <Support />
    </div>
  );
}
